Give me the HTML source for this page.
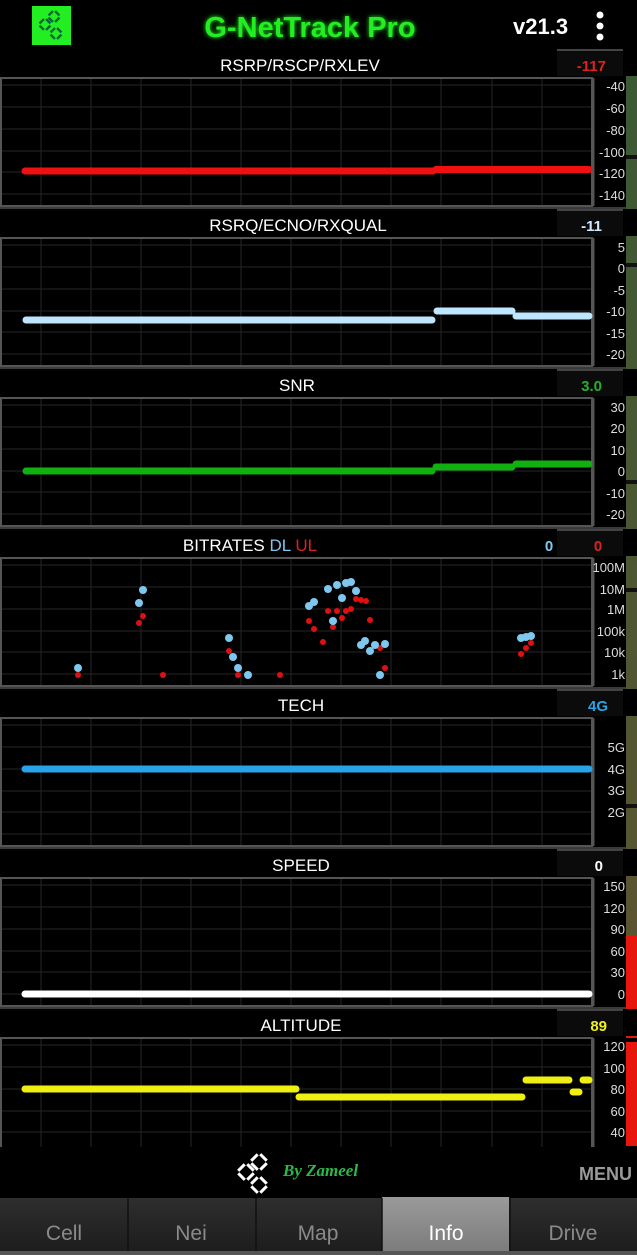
<!DOCTYPE html>
<html><head><meta charset="utf-8"><style>
html,body{margin:0;padding:0;background:#000;width:637px;height:1255px;overflow:hidden}
svg{display:block;font-family:"Liberation Sans",sans-serif}
</style></head><body>
<svg width="637" height="1255" viewBox="0 0 637 1255" xmlns="http://www.w3.org/2000/svg">
<defs>
<filter id="glow" x="-20%" y="-50%" width="140%" height="200%"><feGaussianBlur stdDeviation="2.5" result="b"/><feMerge><feMergeNode in="b"/><feMergeNode in="SourceGraphic"/></feMerge></filter>
<linearGradient id="strip" x1="0" y1="0" x2="0" y2="1"><stop offset="0" stop-color="#3a5a34"/><stop offset="1" stop-color="#5a5530"/></linearGradient>
<linearGradient id="tab" x1="0" y1="0" x2="0" y2="1"><stop offset="0" stop-color="#2e2e2e"/><stop offset="1" stop-color="#1c1c1c"/></linearGradient>
<linearGradient id="tabA" x1="0" y1="0" x2="0" y2="1"><stop offset="0" stop-color="#9a9a9a"/><stop offset="1" stop-color="#7a7a7a"/></linearGradient>
<g id="grid">
<rect x="0" y="0" width="637" height="27" fill="#000"/>
<rect x="557" y="1" width="66" height="26" fill="#0b0b0b"/>
<line x1="557" y1="1" x2="623" y2="1" stroke="#444" stroke-width="2"/>
<g stroke="#262626" stroke-width="1">
<line x1="41" y1="29" x2="41" y2="157"/><line x1="91" y1="29" x2="91" y2="157"/><line x1="141" y1="29" x2="141" y2="157"/><line x1="191" y1="29" x2="191" y2="157"/><line x1="241" y1="29" x2="241" y2="157"/><line x1="291" y1="29" x2="291" y2="157"/><line x1="341" y1="29" x2="341" y2="157"/><line x1="391" y1="29" x2="391" y2="157"/><line x1="441" y1="29" x2="441" y2="157"/><line x1="492" y1="29" x2="492" y2="157"/><line x1="542" y1="29" x2="542" y2="157"/>
<line x1="1" y1="36" x2="591" y2="36"/><line x1="1" y1="58" x2="591" y2="58"/><line x1="1" y1="80" x2="591" y2="80"/><line x1="1" y1="102" x2="591" y2="102"/><line x1="1" y1="123" x2="591" y2="123"/><line x1="1" y1="145" x2="591" y2="145"/>
</g>
<rect x="1" y="29" width="591" height="128" fill="none" stroke="#555" stroke-width="2"/>
<line x1="593" y1="29" x2="593" y2="157" stroke="#555" stroke-width="3"/>
<rect x="0" y="158" width="626" height="2" fill="#3a3a3a"/>
</g>
</defs>
<rect width="637" height="1255" fill="#000"/>
<rect x="32" y="6" width="39" height="39" fill="#22ee22"/>
<g fill="none" stroke="#063" stroke-width="2.4" stroke-dasharray="6.2 3" stroke-dashoffset="-1.5">
<path d="M54 10 L60.5 16.5 L54 23 L47.5 16.5 Z"/><path d="M45 18 L51.5 24.5 L45 31 L38.5 24.5 Z"/><path d="M56 27 L62.5 33.5 L56 40 L49.5 33.5 Z"/>
</g>
<text x="310" y="37" text-anchor="middle" font-size="29" font-weight="bold" fill="#22ee22" filter="url(#glow)">G-NetTrack Pro</text>
<text x="513" y="34" font-size="22" font-weight="bold" fill="#fff">v21.3</text>
<circle cx="600" cy="15" r="3.5" fill="#fff"/><circle cx="600" cy="26" r="3.5" fill="#fff"/><circle cx="600" cy="37" r="3.5" fill="#fff"/>
<rect x="626" y="52" width="11" height="883" fill="url(#strip)"/>
<g fill="#111"><rect x="626" y="155" width="11" height="4"/><rect x="626" y="263" width="11" height="4"/><rect x="626" y="372" width="11" height="4"/><rect x="626" y="480" width="11" height="4"/><rect x="626" y="588" width="11" height="4"/><rect x="626" y="696" width="11" height="4"/><rect x="626" y="804" width="11" height="4"/></g>
<rect x="626" y="935" width="11" height="103" fill="#e8170e"/>
<rect x="626" y="1042" width="11" height="104" fill="#e8170e"/>

<g font-size="17" fill="#fff" text-anchor="middle">
<use href="#grid" y="49"/>
<text x="300" y="71">RSRP/RSCP/RXLEV</text>
<text x="606" y="71" font-size="15" font-weight="bold" fill="#e02020" text-anchor="end">-117</text>
<g font-size="13" fill="#ddd" text-anchor="end"><text x="625" y="91">-40</text><text x="625" y="113">-60</text><text x="625" y="135">-80</text><text x="625" y="157">-100</text><text x="625" y="178">-120</text><text x="625" y="200">-140</text></g>
<path d="M25 171H433M436 169.5H589" stroke="#f01010" stroke-width="7" stroke-linecap="round"/>
<use href="#grid" y="209"/>
<text x="298" y="231">RSRQ/ECNO/RXQUAL</text>
<text x="602" y="231" font-size="15" font-weight="bold" fill="#cfe8ff" text-anchor="end">-11</text>
<g font-size="13" fill="#ddd" text-anchor="end"><text x="625" y="252">5</text><text x="625" y="273">0</text><text x="625" y="295">-5</text><text x="625" y="316">-10</text><text x="625" y="338">-15</text><text x="625" y="359">-20</text></g>
<path d="M26 320H432M437 311H512M516 316H589" stroke="#bfe6ff" stroke-width="7" stroke-linecap="round"/>
<use href="#grid" y="369"/>
<text x="297" y="391">SNR</text>
<text x="602" y="391" font-size="15" font-weight="bold" fill="#28b028" text-anchor="end">3.0</text>
<g font-size="13" fill="#ddd" text-anchor="end"><text x="625" y="412">30</text><text x="625" y="433">20</text><text x="625" y="455">10</text><text x="625" y="476">0</text><text x="625" y="498">-10</text><text x="625" y="519">-20</text></g>
<path d="M26 471H432M436 467H512M516 464H589" stroke="#10b010" stroke-width="7" stroke-linecap="round"/>
<use href="#grid" y="529"/>
<text x="250" y="551">BITRATES <tspan fill="#7ec8f0">DL</tspan> <tspan fill="#e02020">UL</tspan></text>
<text x="549" y="551" font-size="15" font-weight="bold" fill="#7ec8f0">0</text>
<text x="598" y="551" font-size="15" font-weight="bold" fill="#e02020">0</text>
<g font-size="13" fill="#ddd" text-anchor="end"><text x="625" y="572">100M</text><text x="625" y="594">10M</text><text x="625" y="614">1M</text><text x="625" y="636">100k</text><text x="625" y="657">10k</text><text x="625" y="679">1k</text></g>
<g fill="#e01010">
<circle cx="78" cy="675" r="3"/><circle cx="143" cy="616" r="3"/><circle cx="139" cy="623" r="3"/><circle cx="163" cy="675" r="3"/><circle cx="229" cy="651" r="3"/><circle cx="238" cy="675" r="3"/><circle cx="280" cy="675" r="3"/><circle cx="309" cy="621" r="3"/><circle cx="314" cy="629" r="3"/><circle cx="323" cy="642" r="3"/><circle cx="328" cy="611" r="3"/><circle cx="337" cy="611" r="3"/><circle cx="333" cy="627" r="3"/><circle cx="342" cy="618" r="3"/><circle cx="346" cy="611" r="3"/><circle cx="351" cy="609" r="3"/><circle cx="356" cy="599" r="3"/><circle cx="361" cy="600" r="3"/><circle cx="366" cy="601" r="3"/><circle cx="370" cy="620" r="3"/><circle cx="380" cy="648" r="3"/><circle cx="385" cy="668" r="3"/><circle cx="521" cy="654" r="3"/><circle cx="526" cy="648" r="3"/><circle cx="531" cy="643" r="3"/>
</g>
<g fill="#7ec8f0">
<circle cx="78" cy="668" r="4"/><circle cx="143" cy="590" r="4"/><circle cx="139" cy="603" r="4"/><circle cx="229" cy="638" r="4"/><circle cx="233" cy="657" r="4"/><circle cx="238" cy="668" r="4"/><circle cx="248" cy="675" r="4"/><circle cx="309" cy="606" r="4"/><circle cx="314" cy="602" r="4"/><circle cx="328" cy="589" r="4"/><circle cx="337" cy="585" r="4"/><circle cx="346" cy="583" r="4"/><circle cx="351" cy="582" r="4"/><circle cx="356" cy="591" r="4"/><circle cx="342" cy="598" r="4"/><circle cx="333" cy="621" r="4"/><circle cx="361" cy="645" r="4"/><circle cx="365" cy="641" r="4"/><circle cx="370" cy="651" r="4"/><circle cx="375" cy="645" r="4"/><circle cx="385" cy="644" r="4"/><circle cx="380" cy="675" r="4"/><circle cx="521" cy="638" r="4"/><circle cx="526" cy="637" r="4"/><circle cx="531" cy="636" r="4"/>
</g>
<use href="#grid" y="689"/>
<text x="301" y="711">TECH</text>
<text x="608" y="711" font-size="15" font-weight="bold" fill="#29a3e8" text-anchor="end">4G</text>
<g font-size="13" fill="#ddd" text-anchor="end"><text x="625" y="752">5G</text><text x="625" y="774">4G</text><text x="625" y="795">3G</text><text x="625" y="817">2G</text></g>
<path d="M25 769H589" stroke="#29a3e8" stroke-width="7" stroke-linecap="round"/>
<use href="#grid" y="849"/>
<text x="301" y="871">SPEED</text>
<text x="603" y="871" font-size="15" font-weight="bold" fill="#fff" text-anchor="end">0</text>
<g font-size="13" fill="#ddd" text-anchor="end"><text x="625" y="891">150</text><text x="625" y="913">120</text><text x="625" y="934">90</text><text x="625" y="956">60</text><text x="625" y="977">30</text><text x="625" y="999">0</text></g>
<path d="M25 994H589" stroke="#fff" stroke-width="7" stroke-linecap="round"/>
<use href="#grid" y="1009"/>
<text x="301" y="1031">ALTITUDE</text>
<text x="607" y="1031" font-size="15" font-weight="bold" fill="#f0f020" text-anchor="end">89</text>
<g font-size="13" fill="#ddd" text-anchor="end"><text x="625" y="1051">120</text><text x="625" y="1073">100</text><text x="625" y="1094">80</text><text x="625" y="1116">60</text><text x="625" y="1137">40</text></g>
<path d="M25 1089H296M299 1097H522M526 1080H569M573 1092H579M583 1080H589" stroke="#f0f010" stroke-width="7" stroke-linecap="round"/>
</g>
<rect x="0" y="1147" width="626" height="51" fill="#000"/>
<g fill="none" stroke="#fff" stroke-width="3" stroke-dasharray="9.2 3.5" stroke-dashoffset="-1.75">
<path d="M259 1153 L268 1162 L259 1171 L250 1162 Z"/><path d="M246 1163 L255 1172 L246 1181 L237 1172 Z"/><path d="M259 1176 L268 1185 L259 1194 L250 1185 Z"/>
</g>
<text x="283" y="1176" font-family="'Liberation Serif',serif" font-style="italic" font-weight="bold" font-size="17" fill="#2db84a">By Zameel</text>
<text x="632" y="1180" font-size="18" font-weight="bold" fill="#9a9a9a" text-anchor="end">MENU</text>
<rect x="0" y="1198" width="637" height="57" fill="url(#tab)"/>
<rect x="382" y="1197" width="127" height="58" fill="url(#tabA)"/>
<g stroke="#111" stroke-width="1.5"><line x1="128" y1="1198" x2="128" y2="1255"/><line x1="256" y1="1198" x2="256" y2="1255"/><line x1="382" y1="1198" x2="382" y2="1255"/><line x1="510" y1="1198" x2="510" y2="1255"/></g>
<rect x="0" y="1251" width="637" height="4" fill="#555"/>
<g font-size="21" fill="#8a8a8a" text-anchor="middle">
<text x="64" y="1240">Cell</text><text x="191" y="1240">Nei</text><text x="318" y="1240">Map</text><text x="446" y="1240" fill="#fff">Info</text><text x="573" y="1240">Drive</text>
</g>
</svg>
</body></html>
